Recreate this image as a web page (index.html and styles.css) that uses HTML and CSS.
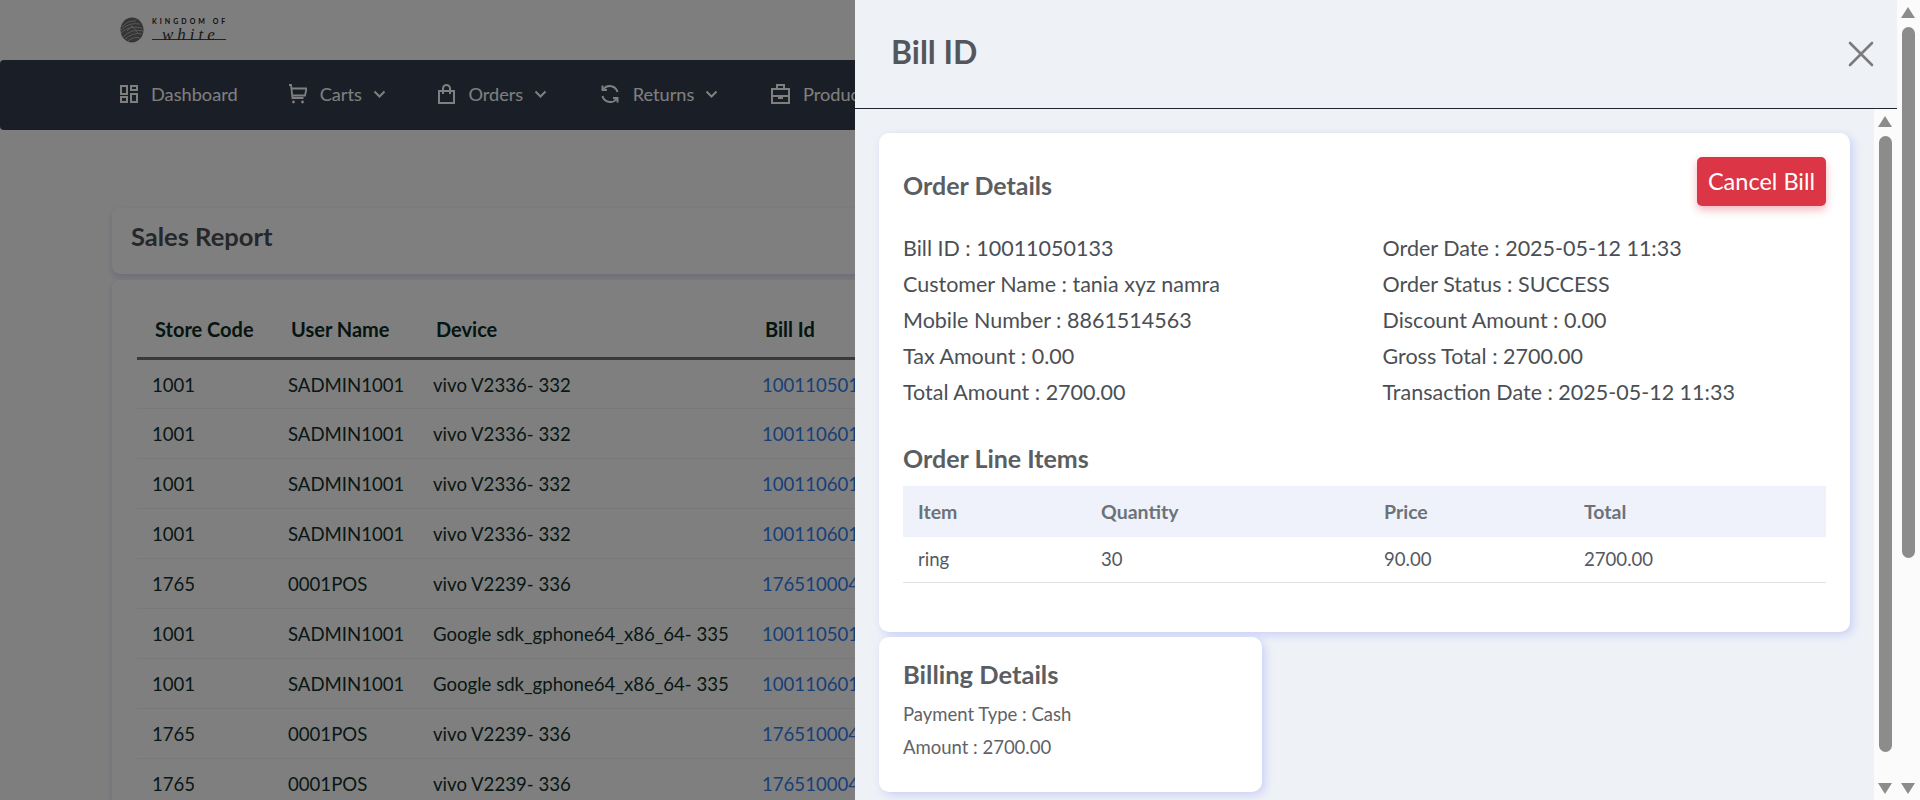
FILE: index.html
```html
<!DOCTYPE html>
<html lang="en">
<head>
  <meta charset="UTF-8">
  <meta name="viewport" content="width=device-width, initial-scale=1.0">
  <title>Sales Report</title>
  <link rel="stylesheet" href="styles.css">
</head>
<body>
  <div class="window">
    <div class="page">
      <div class="topbar">
        <div class="logo">
          <svg class="logo-mark" width="24" height="26" viewBox="0 0 24 26">
            <ellipse cx="12" cy="13" rx="11.5" ry="12.5" fill="#6a6a6a"/>
            <path d="M2 10 Q8 3 16 4 M1 13 Q9 5 20 7 M1 16 Q9 8 22 11 M3 20 Q12 11 23 14 M5 22 Q13 15 22 17 M8 24 Q14 19 20 21 M7 14 L12 9 L18 16" fill="none" stroke="#c4c4c4" stroke-width="0.8"/>
          </svg>
          <div class="logo-text">
            <span class="logo-top">KINGDOM OF</span>
            <span class="logo-script">white</span>
          </div>
        </div>
      </div>

      <nav class="nav">
        <a class="nav-item nav-first">
          <svg width="18" height="18" viewBox="0 0 18 18" fill="none" stroke="#fff" stroke-width="2"><rect x="1" y="1" width="6" height="8"/><rect x="11" y="1" width="6" height="4"/><rect x="1" y="12" width="6" height="5"/><rect x="11" y="9" width="6" height="8"/></svg>
          Dashboard
        </a>
        <a class="nav-item">
          <svg width="19" height="20" viewBox="0 0 19 20" fill="none" stroke="#fff" stroke-width="1.8"><path d="M1 1h2l1.500 13h11M3.500 4.500h15l-1.500 7H4.500"/><circle cx="5.500" cy="18" r="1.400" fill="#fff" stroke="none"/><circle cx="14.500" cy="18" r="1.400" fill="#fff" stroke="none"/></svg>
          Carts
          <svg class="chev" width="13" height="8" viewBox="0 0 13 8" fill="none" stroke="#fff" stroke-width="2"><path d="M1.500 1.500l5 5 5-5"/></svg>
        </a>
        <a class="nav-item">
          <svg width="17" height="20" viewBox="0 0 17 20" fill="none" stroke="#fff" stroke-width="2"><rect x="1" y="7" width="15" height="12"/><path d="M5 10V4.500a3.500 3.500 0 0 1 7 0V10"/></svg>
          Orders
          <svg class="chev" width="13" height="8" viewBox="0 0 13 8" fill="none" stroke="#fff" stroke-width="2"><path d="M1.500 1.500l5 5 5-5"/></svg>
        </a>
        <a class="nav-item">
          <svg width="20" height="20" viewBox="0 0 20 20" fill="none" stroke="#fff" stroke-width="2"><path d="M17.500 8A8 8 0 0 0 3.500 5M2.500 12a8 8 0 0 0 14 3"/><path d="M2.500 1.500V6H7M17.500 18.500V14H13"/></svg>
          Returns
          <svg class="chev" width="13" height="8" viewBox="0 0 13 8" fill="none" stroke="#fff" stroke-width="2"><path d="M1.500 1.500l5 5 5-5"/></svg>
        </a>
        <a class="nav-item">
          <svg width="19" height="20" viewBox="0 0 19 20" fill="none" stroke="#fff" stroke-width="2"><rect x="1" y="5" width="17" height="14"/><path d="M6 5V1h7v4M1 12h17"/><path d="M8 12h3v2H8z" fill="#fff"/></svg>
          Products
          <svg class="chev" width="13" height="8" viewBox="0 0 13 8" fill="none" stroke="#fff" stroke-width="2"><path d="M1.500 1.500l5 5 5-5"/></svg>
        </a>
      </nav>

      <main class="content">
        <div class="card report-head">Sales Report</div>
        <div class="card report-body">
          <table class="report-table">
            <thead>
              <tr>
                <th class="col-store">Store Code</th>
                <th class="col-user">User Name</th>
                <th class="col-device">Device</th>
                <th class="col-bill">Bill Id</th>
              </tr>
            </thead>
            <tbody>
              <tr><td>1001</td><td>SADMIN1001</td><td>vivo V2336- 332</td><td><a class="bill-link">10011050133</a></td></tr>
              <tr><td>1001</td><td>SADMIN1001</td><td>vivo V2336- 332</td><td><a class="bill-link">10011060122</a></td></tr>
              <tr><td>1001</td><td>SADMIN1001</td><td>vivo V2336- 332</td><td><a class="bill-link">10011060121</a></td></tr>
              <tr><td>1001</td><td>SADMIN1001</td><td>vivo V2336- 332</td><td><a class="bill-link">10011060120</a></td></tr>
              <tr><td>1765</td><td>0001POS</td><td>vivo V2239- 336</td><td><a class="bill-link">17651000412</a></td></tr>
              <tr><td>1001</td><td>SADMIN1001</td><td>Google sdk_gphone64_x86_64- 335</td><td><a class="bill-link">10011050132</a></td></tr>
              <tr><td>1001</td><td>SADMIN1001</td><td>Google sdk_gphone64_x86_64- 335</td><td><a class="bill-link">10011060119</a></td></tr>
              <tr><td>1765</td><td>0001POS</td><td>vivo V2239- 336</td><td><a class="bill-link">17651000411</a></td></tr>
              <tr><td>1765</td><td>0001POS</td><td>vivo V2239- 336</td><td><a class="bill-link">17651000410</a></td></tr>
            </tbody>
          </table>
        </div>
      </main>

      <div class="overlay"></div>

      <aside class="panel">
        <header class="panel-header">
          <h2 class="panel-title">Bill ID</h2>
          <svg class="panel-close" width="26" height="26" viewBox="0 0 26 26" fill="none" stroke="#7b7b7b" stroke-width="2.600" stroke-linecap="round"><path d="M2 2l22 22M24 2L2 24"/></svg>
        </header>
        <div class="panel-main">
          <div class="panel-scroll">
            <section class="bill-card">
              <div class="bill-top">
                <h3 class="section-title">Order Details</h3>
                <button class="cancel-btn" type="button">Cancel Bill</button>
              </div>
              <div class="detail-grid">
                <div>Bill ID : 10011050133</div>
                <div>Order Date : 2025-05-12 11:33</div>
                <div>Customer Name : tania xyz namra</div>
                <div>Order Status : SUCCESS</div>
                <div>Mobile Number : 8861514563</div>
                <div>Discount Amount : 0.00</div>
                <div>Tax Amount : 0.00</div>
                <div>Gross Total : 2700.00</div>
                <div>Total Amount : 2700.00</div>
                <div>Transaction Date : 2025-05-12 11:33</div>
              </div>
              <h3 class="section-title items-title">Order Line Items</h3>
              <table class="items-table">
                <thead>
                  <tr>
                    <th class="col-item">Item</th>
                    <th class="col-qty">Quantity</th>
                    <th class="col-price">Price</th>
                    <th>Total</th>
                  </tr>
                </thead>
                <tbody>
                  <tr><td>ring</td><td>30</td><td>90.00</td><td>2700.00</td></tr>
                </tbody>
              </table>
            </section>
            <section class="bill-card billing-card">
              <h3 class="section-title">Billing Details</h3>
              <p class="billing-line">Payment Type : Cash</p>
              <p class="billing-line">Amount : 2700.00</p>
            </section>
          </div>
          <div class="scrollbar scrollbar-inner">
            <span class="arrow-up"></span>
            <span class="thumb thumb-inner"></span>
            <span class="arrow-down"></span>
          </div>
        </div>
      </aside>
    </div>

    <div class="scrollbar scrollbar-outer">
      <span class="arrow-up"></span>
      <span class="thumb thumb-outer"></span>
      <span class="arrow-down"></span>
    </div>
  </div>
</body>
</html>
```

FILE: styles.css
```css
* {
  box-sizing: border-box;
}
body {
  margin: 0;
  font-family: Lato, "Noto Sans", sans-serif;
  overflow: hidden;
}
.window {
  display: flex;
  width: 1920px;
  height: 800px;
}
.page {
  position: relative;
  width: 1897px;
  height: 800px;
  overflow: hidden;
  background-color: #fdfdfd;
}

/* top */
.topbar {
  height: 60px;
  padding: 17px 0 0 120px;
}
.logo {
  display: flex;
  gap: 8px;
}
.logo-text {
  display: flex;
  flex-direction: column;
}
.logo-top {
  font-size: 7px;
  line-height: 9px;
  letter-spacing: 3px;
  font-weight: 700;
  color: #222;
  white-space: nowrap;
}
.logo-script {
  margin-top: 1px;
  padding-left: 10px;
  width: 74px;
  font-family: "Liberation Serif", serif;
  font-style: italic;
  font-size: 17px;
  line-height: 16px;
  letter-spacing: 4px;
  color: #333;
  background: linear-gradient(#444, #444) 0 12px / 100% 1px no-repeat;
}
.nav {
  display: flex;
  align-items: center;
  height: 70px;
  padding: 0 0 2px 120px;
  background-color: #343c4c;
  border-radius: 4px 0 0 4px;
}
.nav-item {
  display: flex;
  align-items: center;
  gap: 13px;
  margin-right: 52.5px;
  font-size: 18.2px;
  color: #fff;
  white-space: nowrap;
}
.nav-first {
  margin-right: 50px;
}
.chev {
  margin-left: -2px;
}

/* report behind the panel */
.content {
  padding: 78px 0 0 112px;
}
.card {
  background-color: #fff;
  border-radius: 8px;
  box-shadow: 0 3px 6px rgba(100, 105, 230, 0.25);
}
.report-head {
  height: 66px;
  width: 1500px;
  padding: 0 19px;
  margin-bottom: 6px;
  font-size: 25.5px;
  font-weight: 700;
  line-height: 56px;
  color: #4b4f55;
}
.report-body {
  width: 1500px;
  height: 700px;
  padding: 22px 25px;
}
.report-table {
  border-collapse: collapse;
  table-layout: fixed;
  width: 1400px;
  font-size: 18.6px;
  color: #11302a;
}
.report-table th {
  height: 56px;
  padding: 0 0 0 18px;
  text-align: left;
  font-size: 20px;
  font-weight: 700;
  border-bottom: 3px solid #6f757b;
  color: #0b2b24;
}
.report-table td {
  height: 50px;
  padding: 2px 0 0 15px;
  border-bottom: 1px solid #f0f0f0;
  white-space: nowrap;
}
.col-store {
  width: 136px;
}
.col-user {
  width: 145px;
}
.col-device {
  width: 329px;
}
.bill-link {
  color: #2f80f0;
}
.overlay {
  position: absolute;
  top: 0;
  left: 0;
  width: 100%;
  height: 100%;
  background-color: rgba(0, 0, 0, 0.5);
}

/* bill panel */
.panel {
  position: absolute;
  top: 0;
  right: 0;
  width: 1042px;
  height: 800px;
  display: flex;
  flex-direction: column;
  background-color: #eef1f6;
}
.panel-header {
  display: flex;
  justify-content: space-between;
  align-items: center;
  flex: none;
  height: 109px;
  padding: 0 23px 5px 36px;
  border-bottom: 1px solid #22252b;
}
.panel-title {
  margin: 0;
  font-size: 32px;
  font-weight: 700;
  color: #53575c;
}
.panel-close {
  margin-top: 5px;
}
.panel-main {
  display: flex;
  flex: 1;
  min-height: 0;
}
.panel-scroll {
  flex: 1;
  padding: 24px;
  overflow: hidden;
}
.bill-card {
  background-color: #fff;
  border-radius: 10px;
  padding: 24px;
  box-shadow: 3px 3px 9px rgba(115, 125, 255, 0.28);
  height: 499px;
}
.bill-top {
  display: flex;
  justify-content: space-between;
  height: 49px;
}
.section-title {
  margin: 0;
  font-size: 25px;
  font-weight: 700;
  color: #5a5e63;
}
.bill-top .section-title {
  margin-top: 13px;
}
.cancel-btn {
  width: 129px;
  height: 49px;
  padding: 0 0 2px;
  background-color: #dc3545;
  color: #fff;
  border: none;
  border-radius: 5px;
  font-family: inherit;
  font-size: 23.5px;
  box-shadow: 0 4px 8px rgba(220, 53, 69, 0.35);
}
.detail-grid {
  display: grid;
  grid-template-columns: 1fr 1fr;
  column-gap: 36px;
  margin-top: 24px;
  font-size: 21.5px;
  line-height: 36px;
  color: #4b4f54;
}
.items-title {
  margin-top: 33px;
  margin-bottom: 13px;
}
.items-table {
  width: 100%;
  border-collapse: collapse;
  table-layout: fixed;
  font-size: 18.6px;
  color: #55595f;
}
.items-table th {
  height: 51px;
  padding: 0 0 0 15px;
  text-align: left;
  font-size: 19.5px;
  font-weight: 700;
  background-color: #eff2fb;
  color: #6c7278;
}
.items-table td {
  height: 45px;
  padding: 0 0 0 15px;
  border-bottom: 1px solid #dfe1e4;
}
.col-item {
  width: 183px;
}
.col-qty {
  width: 283px;
}
.col-price {
  width: 200px;
}
.billing-card {
  width: 383px;
  height: 155px;
  margin-top: 5px;
  padding-top: 22px;
}
.billing-card .section-title {
  font-size: 25.5px;
  margin-bottom: 9px;
}
.billing-line {
  margin: 0;
  font-size: 18.5px;
  line-height: 33px;
  color: #5f6368;
}

/* scrollbars are drawn, the screenshot has them always on */
.scrollbar {
  position: relative;
  flex: none;
  width: 23px;
  background-color: #fbfbfb;
}
.scrollbar-outer {
  height: 800px;
}
.thumb {
  position: absolute;
  left: 5px;
  width: 13px;
  background-color: #8c8c8c;
  border-radius: 7px;
}
.thumb-inner {
  top: 27px;
  bottom: 48px;
}
.thumb-outer {
  top: 27px;
  height: 531px;
}
.arrow-up,
.arrow-down {
  position: absolute;
  left: 4px;
  width: 0;
  height: 0;
  border-left: 7.5px solid transparent;
  border-right: 7.5px solid transparent;
}
.arrow-up {
  top: 7px;
  border-bottom: 11px solid #8c8c8c;
}
.arrow-down {
  bottom: 6px;
  border-top: 11px solid #8c8c8c;
}
```
